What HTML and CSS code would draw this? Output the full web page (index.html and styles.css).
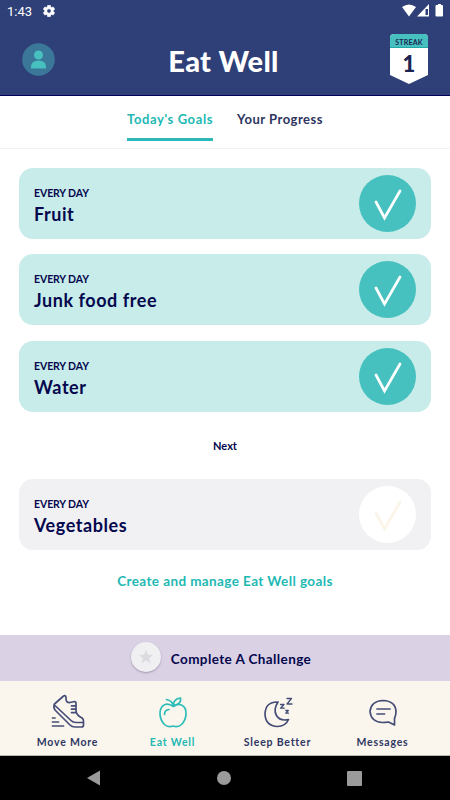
FILE: index.html
```html
<!DOCTYPE html>
<html lang="en">

<head>
    <meta charset="UTF-8">
    <meta name="viewport" content="width=device-width, initial-scale=1.0">
    <title>Eat Well</title>
    <link rel="stylesheet" href="styles.css">
</head>

<body>
    <header class="header">
        <div class="status-bar">
            <span class="time">1:43</span>
            <svg class="gear" width="12" height="12" viewBox="2 2 20 20">
                <path fill="#fff" stroke="#fff" d="M19.14 12.94c.04-.3.06-.61.06-.94s-.02-.64-.07-.94l2.03-1.58c.18-.14.23-.41.12-.61l-1.92-3.32c-.12-.22-.37-.29-.59-.22l-2.39.96c-.5-.38-1.03-.7-1.62-.94l-.36-2.54c-.04-.24-.24-.41-.48-.41h-3.84c-.24 0-.43.17-.47.41l-.36 2.54c-.59.24-1.13.57-1.62.94l-2.39-.96c-.22-.08-.47 0-.59.22L2.74 8.87c-.12.21-.08.47.12.61l2.03 1.58c-.05.3-.09.63-.09.94s.02.64.07.94l-2.03 1.58c-.18.14-.23.41-.12.61l1.92 3.32c.12.22.37.29.59.22l2.39-.96c.5.38 1.03.7 1.62.94l.36 2.54c.05.24.24.41.48.41h3.84c.24 0 .44-.17.47-.41l.36-2.54c.59-.24 1.13-.56 1.62-.94l2.39.96c.22.08.47 0 .59-.22l1.92-3.32c.12-.22.07-.47-.12-.61l-2.01-1.58zM12 15.6a3.6 3.6 0 1 1 0-7.2 3.6 3.6 0 0 1 0 7.2z"/>
            </svg>
            <svg class="signals" width="42" height="14" viewBox="0 0 42 14">
                <path fill="#fff" d="M0 3Q7-2 14 3L7 12.500zM27 0v12.500H15z"/>
                <path fill="#2e4077" d="M23.500 5H26v6h-2.500z"/>
                <path fill="#fff" d="M36 0h3v1h1q1 0 1 1v9.500q0 1-1 1h-5.500q-1 0-1-1V2q0-1 1-1H36z"/>
            </svg>
        </div>
        <div class="title-bar">
            <svg class="avatar" width="33" height="33" viewBox="0 0 33 33">
                <circle cx="16.500" cy="16.500" r="16.300" fill="#3b7798"/>
                <circle cx="16.500" cy="12" r="4.500" fill="#47c1bf"/>
                <path fill="#47c1bf" d="M9 25.500V24q0-6.500 7.500-6.500T24 24v1.500z"/>
            </svg>
            <h1>Eat Well</h1>
            <div class="streak">
                <span class="streak-label">STREAK</span>
                <span class="streak-count">1</span>
            </div>
        </div>
    </header>

    <nav class="tabs">
        <a class="tab active">Today's Goals</a>
        <a class="tab">Your Progress</a>
    </nav>

    <main class="goals">
        <div class="goal">
            <div>
                <div class="frequency">EVERY DAY</div>
                <div class="goal-name">Fruit</div>
            </div>
            <svg class="check" viewBox="0 0 57 57">
                <path d="M17 27l8.500 16L41 16"/>
            </svg>
        </div>
        <div class="goal">
            <div>
                <div class="frequency">EVERY DAY</div>
                <div class="goal-name">Junk food free</div>
            </div>
            <svg class="check" viewBox="0 0 57 57">
                <path d="M17 27l8.500 16L41 16"/>
            </svg>
        </div>
        <div class="goal">
            <div>
                <div class="frequency">EVERY DAY</div>
                <div class="goal-name">Water</div>
            </div>
            <svg class="check" viewBox="0 0 57 57">
                <path d="M17 27l8.500 16L41 16"/>
            </svg>
        </div>
        <div class="next">Next</div>
        <div class="goal pending">
            <div>
                <div class="frequency">EVERY DAY</div>
                <div class="goal-name">Vegetables</div>
            </div>
            <svg class="check" viewBox="0 0 57 57">
                <path d="M17 27l8.500 16L41 16"/>
            </svg>
        </div>
        <a class="manage">Create and manage Eat Well goals</a>
    </main>

    <div class="challenge">
        <div class="star">
            <svg width="16" height="16" viewBox="0 0 16 16">
                <path fill="#dcdce0" d="M8 .8l2 5h5.300L11 9.200l1.700 5.300L8 11.300l-4.700 3.200L5 9.200.7 5.800H6z"/>
            </svg>
        </div>
        <span>Complete A Challenge</span>
    </div>

    <nav class="bottom-nav">
        <a class="nav-item">
            <svg width="34" height="34" viewBox="0 0 34 34">
                <path d="M3.500 10L12 2.500Q14 .5 15 3v2.500Q15.500 9 19 8.500l4.500-1Q25 7.500 25 9v7q0 4 3.500 6.500l2.500 1.500q1.500 1 1.500 3v4q0 2-2 2H24q-3 0-5-2L4 16Q2 13 3.500 10zM4.500 12L20 26.500q2 2 5 2h7.500M20.500 11.800H25M20.500 15.200H25M20.500 18.600h5M1.500 24H4M1.500 28h6M1.500 32h11"/>
            </svg>
            <span>Move More</span>
        </a>
        <a class="nav-item active">
            <svg width="34" height="34" viewBox="0 0 34 34">
                <path d="M17.500 12.500Q12.500 9 9 10.500 4 12.500 4 19.500q0 6.500 4.500 11 3.500 3.500 8.500 1.500 5 2 8.500-1.500 4.500-4.500 4.500-11 0-6.500-4.500-8.500-3.500-1.500-8 1.500zM17.500 12.500q-1-6-7-7M17.500 11.500Q17 5 24.500 4q1 6.500-7 7.500M8.500 20.500q0-4.500 4.500-5"/>
            </svg>
            <span>Eat Well</span>
        </a>
        <a class="nav-item">
            <svg width="34" height="34" viewBox="0 0 34 34">
                <path d="M17 8Q4.500 7.500 4 20 4.500 32 16.500 32.500q8 0 11-7-8.500 2-12-4T17 8z"/>
                <path class="zzz" d="M26 4.500h4.500L26 10h5M19.500 10.500H23l-3.500 3.700h3.700M24.800 16.500h2.500l-2.500 2.700h2.700"/>
            </svg>
            <span>Sleep Better</span>
        </a>
        <a class="nav-item">
            <svg width="34" height="34" viewBox="0 0 34 34">
                <path d="M28.500 24.500V31l-6-3q-3 .5-6 .5-11.500-.5-12.500-11Q5 7 17 6.500 29.500 7 30 17.500q0 4-1.500 7zM11 15h13M11 20h7.500"/>
            </svg>
            <span>Messages</span>
        </a>
    </nav>

    <footer class="system-nav">
        <svg width="14" height="16" viewBox="0 0 14 16"><path d="M0 8L13 .5v15z"/></svg>
        <svg width="14" height="14" viewBox="0 0 14 14"><circle cx="7" cy="7" r="7"/></svg>
        <svg width="15" height="15" viewBox="0 0 15 15"><rect width="15" height="15" rx="1"/></svg>
    </footer>
</body>

</html>
```
FILE: styles.css
```css
* {
    box-sizing: border-box;
}

body {
    display: flex;
    flex-direction: column;
    width: 450px;
    height: 800px;
    margin: 0;
    overflow: hidden;
    background-color: #fff;
    color: #04074d;
    font-family: Lato, "Open Sans", sans-serif;
    font-weight: 700;
}

svg {
    display: block;
    flex: none;
}

.header {
    height: 96px;
    border-bottom: 1px solid #02025a;
    background-color: #2e4077;
    color: #fff;
}

.status-bar {
    display: flex;
    align-items: center;
    height: 22px;
    padding: 0 7px;
}

.time {
    width: 36px;
    font: 400 13px Roboto, sans-serif;
}

.signals {
    margin-left: auto;
    margin-right: -1px;
}

.title-bar {
    display: grid;
    grid-template-columns: 60px 1fr 60px;
    justify-items: center;
    height: 73px;
    padding: 0 12px 0 9px;
}

.avatar {
    margin-top: 21px;
    margin-right: 1px;
}

h1 {
    margin: 21px 0 0;
    font-size: 29px;
    font-weight: 900;
    line-height: 36px;
    letter-spacing: 0.3px;
}

.streak {
    display: flex;
    flex-direction: column;
    align-items: center;
    width: 38px;
    height: 50px;
    margin-top: 12px;
    margin-left: 2px;
    border-radius: 4px 4px 0 0;
    background-color: #fff;
    color: #1c2452;
    clip-path: polygon(0 0, 100% 0, 100% 41px, 50% 100%, 0 41px);
}

.streak-label {
    width: 100%;
    height: 14px;
    border-bottom: 1px solid #22a9a7;
    border-radius: 4px 4px 0 0;
    background-color: #47c1bf;
    font-size: 7px;
    line-height: 16px;
    letter-spacing: 0.2px;
    text-align: center;
}

.streak-count {
    font-size: 22px;
    font-weight: 900;
    line-height: 32px;
}

.tabs {
    display: flex;
    justify-content: center;
    gap: 24px;
    height: 53px;
    padding-top: 13px;
    border-bottom: 1px solid #f2f2f4;
}

.tab {
    height: 32px;
    color: #2e3560;
    font-size: 13px;
    line-height: 21px;
    letter-spacing: 0.5px;
}

.tab.active {
    border-bottom: 3px solid #2cb9b7;
    color: #22b8b3;
    letter-spacing: 0.6px;
}

.goals {
    display: flex;
    flex-direction: column;
    height: 486px;
    padding: 19px 19px 0;
}

.goal {
    display: flex;
    justify-content: space-between;
    align-items: center;
    height: 71px;
    margin-bottom: 15.300px;
    padding: 0 15px;
    border-radius: 14px;
    background-color: #c8ecea;
}

.frequency {
    padding-top: 5px;
    font-size: 10.500px;
    line-height: 14px;
    letter-spacing: -0.1px;
}

.goal-name {
    margin-top: 2px;
    font-size: 18px;
    line-height: 24px;
    letter-spacing: 0.55px;
}

.check {
    width: 57px;
    height: 57px;
    border-radius: 50%;
    background-color: #47c1bf;
    fill: none;
    stroke: #fff;
    stroke-width: 2.700;
    stroke-linecap: round;
}

.pending {
    background-color: #f1f1f3;
}

.pending .check {
    background-color: #fff;
    stroke: #fbf4e8;
}

.next {
    height: 52px;
    padding-top: 11px;
    font-size: 11px;
    line-height: 16px;
    text-align: center;
}

.manage {
    margin-top: 6px;
    color: #22b8b3;
    font-size: 13.500px;
    line-height: 20px;
    letter-spacing: 0.4px;
    text-align: center;
}

.challenge {
    display: flex;
    justify-content: center;
    align-items: center;
    gap: 10px;
    height: 46px;
    padding-right: 8px;
    background-color: #dad1e4;
    font-size: 13.500px;
    letter-spacing: 0.4px;
}

.challenge span {
    padding-top: 2px;
}

.star {
    display: flex;
    justify-content: center;
    align-items: center;
    width: 30px;
    height: 30px;
    margin-bottom: 2px;
    border-radius: 50%;
    background-color: #f0f0f3;
    box-shadow: 0 1px 2px rgba(60, 50, 80, 0.35);
}

.bottom-nav {
    display: grid;
    grid-template-columns: repeat(4, 105px);
    justify-content: center;
    height: 75px;
    padding-top: 13px;
    border-bottom: 1px solid #b5b8a5;
    background-color: #faf6ed;
}

.nav-item {
    display: flex;
    flex-direction: column;
    align-items: center;
    color: #2e3663;
    font-size: 10.500px;
    line-height: 16px;
    letter-spacing: 0.8px;
    white-space: nowrap;
}

.nav-item svg {
    margin-bottom: 6px;
    fill: none;
    stroke: #454d77;
    stroke-width: 1.700;
    stroke-linejoin: round;
    stroke-linecap: round;
}

.nav-item .zzz {
    stroke-width: 1.300;
}

.nav-item.active {
    color: #22b8b3;
}

.nav-item.active svg {
    stroke: #2cbcb8;
}

.system-nav {
    display: flex;
    justify-content: space-between;
    align-items: center;
    height: 44px;
    padding: 0 88px 0 87px;
    background-color: #000;
    fill: #9b9b9b;
}
```
